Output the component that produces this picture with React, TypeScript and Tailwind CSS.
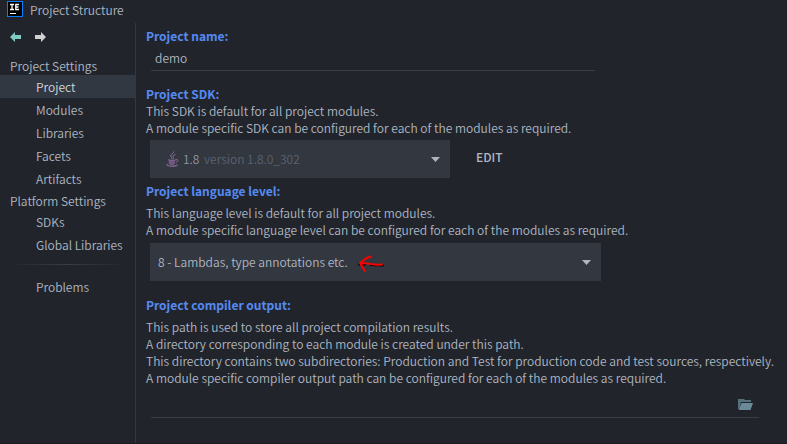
import type { ReactNode } from 'react';

interface NavItem {
  label: string;
  active?: boolean;
}

const projectItems: NavItem[] = [
  { label: 'Project', active: true },
  { label: 'Modules' },
  { label: 'Libraries' },
  { label: 'Facets' },
  { label: 'Artifacts' },
];

const platformItems: NavItem[] = [{ label: 'SDKs' }, { label: 'Global Libraries' }];

function IntellijLogo() {
  return (
    <svg width="16" height="16" viewBox="0 0 16 16" aria-hidden="true">
      <rect width="16" height="16" fill="#087cfa" />
      <rect x="1" y="1" width="14" height="14" fill="#000" />
      <path d="M3 3.5h4M5 3.5v5M3 8.5h4M12 3.5H8.8v5H12M8.8 6h2.7" fill="none" stroke="#fff" strokeWidth="1.3" />
      <path d="M3 12.5h6" stroke="#fff" strokeWidth="1" />
    </svg>
  );
}

function ArrowIcon({ flip }: { flip?: boolean }) {
  return (
    <svg width="11" height="10" viewBox="0 0 11 10" fill="currentColor" aria-hidden="true">
      {flip ? <path d="M11 5 6 0v3H0v4h6v3z" /> : <path d="M0 5l5-5v3h6v4H5v3z" />}
    </svg>
  );
}

function JavaIcon() {
  return (
    <svg width="13" height="16" viewBox="0 0 13 16" fill="none" stroke="#8d6a9f" aria-hidden="true">
      <path d="M7.5.5c.8 2-3.2 2.6-2.8 4.6.2 1 1.3 1.5 1.5 2.9M9.5 3.5C7 4.3 6.3 5.2 7.2 6.2c.6.8.4 1.4-.2 2" />
      <path d="M2.5 8.5c-.8 1 6 1 7.5.2M3 10.5c.8.9 4.8.9 6 .2M3.5 12.5c1 .8 4 .8 5 .1" strokeWidth="1.2" />
      <path d="M10 8.6c2.5-.6 2.4 2-.2 2.600" />
      <path d="M2.5 12.8C-1 13.8.5 15 5 15c4 0 6.5-.8 5.7-2" />
      <path d="M4 15.5c4 .3 7-.2 8-1.2" strokeWidth=".7" />
    </svg>
  );
}

function FolderIcon() {
  return (
    <svg width="15" height="12" viewBox="0 0 15 12" aria-hidden="true">
      <path d="M0 0h6l1 1h6v2H3L1.5 10H0z" fill="#56707c" />
      <path d="M3.5 4H15L12.5 11H.8z" fill="#6a8a98" />
    </svg>
  );
}

function Caret() {
  return (
    <svg
      className="pointer-events-none absolute top-1/2 right-2.5 -mt-0.5"
      width="9"
      height="5"
      viewBox="0 0 9 5"
      aria-hidden="true"
    >
      <path d="M0 0h9L4.5 5z" fill="#afb4c0" />
    </svg>
  );
}

function RedArrow() {
  return (
    <svg
      className="pointer-events-none absolute top-1/2 left-[207px] -mt-2"
      width="30"
      height="20"
      viewBox="0 0 30 20"
      fill="none"
      strokeLinecap="round"
      aria-hidden="true"
    >
      <path d="M2 10.5h6M14 11l12 .5" stroke="#000" strokeWidth="2" />
      <path d="M14 2.5C10 3.5 6 6 3 9.500M3 9.500l5 7.500M4 10c4-1.500 7-.5 11 .2s6 .7 10 .2" stroke="#f00" strokeWidth="2" />
    </svg>
  );
}

function NavList({ items }: { items: NavItem[] }) {
  return (
    <ul>
      {items.map((item) => (
        <li key={item.label}>
          <button
            className={
              item.active
                ? 'block h-[23px] w-full bg-[#323842] pl-9 text-left text-[#d3d7de]'
                : 'block h-[23px] w-full pl-9 text-left hover:bg-[#2a2e37]'
            }
          >
            {item.label}
          </button>
        </li>
      ))}
    </ul>
  );
}

function Heading({ htmlFor, children }: { htmlFor: string; children: ReactNode }) {
  return (
    <label htmlFor={htmlFor} className="block font-bold text-[#568af2]">
      {children}
    </label>
  );
}

export default function App() {
  return (
    <div className="flex min-h-screen flex-col border-b border-[#1b181f] bg-[#21252b] font-['Noto_Sans_CJK_KR',sans-serif] text-[12px] leading-[17px] font-[350] text-[#b0b7c4]">
      <header className="flex h-[23px] items-center gap-[7px] pb-[5px] pl-[7px]">
        <IntellijLogo />
        <h1 className="font-[350]">Project Structure</h1>
      </header>

      <div className="flex flex-1">
        <nav className="w-[136px] shrink-0 border-r border-[#323842]">
          <div className="flex h-8 items-center gap-3.5 pb-1 pl-2.5">
            <button aria-label="Back" className="text-[#80cbc4]">
              <ArrowIcon />
            </button>
            <button aria-label="Forward" className="text-[#d0d0d0]">
              <ArrowIcon flip />
            </button>
          </div>
          <h2 className="h-5 pt-0.5 pl-2.5 font-[350]">Project Settings</h2>
          <NavList items={projectItems} />
          <h2 className="h-5 pt-0.5 pl-2.5 font-[350]">Platform Settings</h2>
          <NavList items={platformItems} />
          <div className="mx-2 mt-2 mb-2.5 h-px bg-linear-to-r from-transparent via-[#383d47] to-transparent" />
          <NavList items={[{ label: 'Problems' }]} />
        </nav>

        <main className="min-w-0 flex-1 pt-1 pl-2.5">
          <Heading htmlFor="project-name">Project name:</Heading>
          <input
            id="project-name"
            type="text"
            defaultValue="demo"
            className="mt-[3px] ml-[5px] block h-6 w-full max-w-[444px] border-b border-[#383d47] bg-transparent pb-0.5 pl-1 outline-none"
          />

          <div className="mt-3.5">
            <Heading htmlFor="project-sdk">Project SDK:</Heading>
            <p>This SDK is default for all project modules.</p>
            <p>A module specific SDK can be configured for each of the modules as required.</p>
          </div>
          <div className="mt-1 ml-1 flex items-center gap-[26px]">
            <div className="relative w-[300px]">
              <select id="project-sdk" className="block h-[38px] w-full appearance-none bg-[#323740] pb-0.5 pl-[33px] text-[#8f96a3] outline-none">
                <option>1.8</option>
              </select>
              <div className="pointer-events-none absolute inset-y-0 left-4 flex items-center">
                <JavaIcon />
              </div>
              <span className="pointer-events-none absolute inset-y-0 left-[54px] flex items-center pb-0.5 text-[#5c6370]">
                version 1.8.0_302
              </span>
              <Caret />
            </div>
            <button className="pb-1.5 font-medium">EDIT</button>
          </div>

          <div className="mt-1">
            <Heading htmlFor="language-level">Project language level:</Heading>
            <p className="mt-[5px]">This language level is default for all project modules.</p>
            <p>A module specific language level can be configured for each of the modules as required.</p>
          </div>
          <div className="relative mt-[5px] ml-1 w-full max-w-[451px]">
            <select id="language-level" className="block h-[38px] w-full appearance-none bg-[#323740] pb-0.5 pl-2 outline-none">
              <option>8 - Lambdas, type annotations etc.</option>
            </select>
            <RedArrow />
            <Caret />
          </div>

          <div className="mt-[15px]">
            <Heading htmlFor="compiler-output">Project compiler output:</Heading>
            <p className="mt-[5px]">This path is used to store all project compilation results.</p>
            <p>A directory corresponding to each module is created under this path.</p>
            <p className="whitespace-nowrap">
              This directory contains two subdirectories: Production and Test for production code and test sources, respectively.
            </p>
            <p>A module specific compiler output path can be configured for each of the modules as required.</p>
          </div>
          <div className="mt-[9px] mr-7 ml-[5px] flex h-[23px] items-center border-b border-[#383d47] pr-1.5 pb-0.5">
            <input id="compiler-output" type="text" className="min-w-0 flex-1 bg-transparent pl-1 outline-none" />
            <button aria-label="Browse">
              <FolderIcon />
            </button>
          </div>
        </main>
      </div>
    </div>
  );
}
